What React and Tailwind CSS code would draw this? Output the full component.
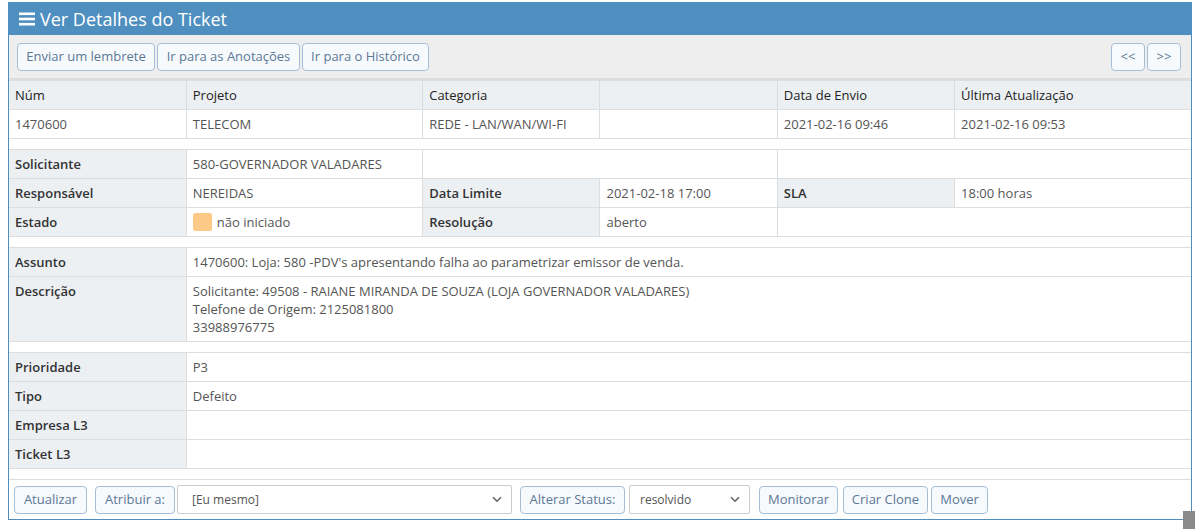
import React from "react";

const btn =
  "h-[28px] px-0 rounded-[4px] border border-[#a6bfd7] bg-[#f7fafd] text-[13px] text-[#5b7896] leading-none whitespace-nowrap";
const lbl = "bg-[#ecf0f3] text-[#333] font-semibold";
const cell =
  "border-t border-b border-l first:border-l-0 border-[#dddddd] px-[6px] py-[5px] leading-[18px] align-top text-[13px]";
const val = "text-[#555]";

function Bars() {
  return (
    <svg width="16" height="14" viewBox="0 0 16 14" className="mr-[5px]">
      <rect x="0" y="0.5" width="16" height="2.6" fill="white" />
      <rect x="0" y="5.7" width="16" height="2.6" fill="white" />
      <rect x="0" y="10.9" width="16" height="2.6" fill="white" />
    </svg>
  );
}

function Chevron() {
  return (
    <svg width="10" height="7" viewBox="0 0 10 7" className="absolute right-[10px] top-[11px] pointer-events-none">
      <path d="M1 1.2 L5 5.2 L9 1.2" stroke="#666" strokeWidth="1.6" fill="none" />
    </svg>
  );
}

function Cols() {
  return (
    <colgroup>
      <col className="w-[15%]" />
      <col className="w-[20%]" />
      <col className="w-[15%]" />
      <col className="w-[15%]" />
      <col className="w-[15%]" />
      <col className="w-[20%]" />
    </colgroup>
  );
}

export default function App() {
  return (
    <div
      className="relative w-[1195px] h-[529px] bg-white pt-[2px] pl-[8px]"
      style={{ fontFamily: '"Open Sans", "Liberation Sans", sans-serif' }}
    >
      <div className="w-[1184px] border border-[#4f8fc0]">
        <div className="h-[32px] bg-[#4f8fc0] flex items-center pl-[10px] text-white text-[18px]">
          <Bars />
          <span>Ver Detalhes do Ticket</span>
        </div>

        <div className="h-[45px] bg-[#eeeeee] border-b-2 border-[#dcdcdc] flex items-center justify-between pl-[8px] pr-[10px]">
          <div className="flex gap-[2px]">
            <button className={btn + " w-[138px]"}>Enviar um lembrete</button>
            <button className={btn + " w-[143px]"}>Ir para as Anotações</button>
            <button className={btn + " w-[127px]"}>Ir para o Histórico</button>
          </div>
          <div className="flex gap-[2px]">
            <button className={btn + " w-[34px] text-[11px]"}>&lt;&lt;</button>
            <button className={btn + " w-[34px] text-[11px]"}>&gt;&gt;</button>
          </div>
        </div>

        <table className="w-full table-fixed border-collapse">
          <Cols />
          <tbody>
            <tr className="bg-[#ecf0f3] text-[#222]">
              <td className={cell}>Núm</td>
              <td className={cell}>Projeto</td>
              <td className={cell}>Categoria</td>
              <td className={cell}></td>
              <td className={cell}>Data de Envio</td>
              <td className={cell}>Última Atualização</td>
            </tr>
            <tr>
              <td className={cell + " " + val}>1470600</td>
              <td className={cell + " " + val}>TELECOM</td>
              <td className={cell + " " + val}>REDE - LAN/WAN/WI-FI</td>
              <td className={cell}></td>
              <td className={cell + " " + val}>2021-02-16 09:46</td>
              <td className={cell + " " + val}>2021-02-16 09:53</td>
            </tr>
          </tbody>
        </table>

        <table className="w-full table-fixed border-collapse mt-[10px]">
          <Cols />
          <tbody>
            <tr>
              <td className={cell + " " + lbl}>Solicitante</td>
              <td className={cell + " " + val}>580-GOVERNADOR VALADARES</td>
              <td className={cell} colSpan={2}></td>
              <td className={cell} colSpan={2}></td>
            </tr>
            <tr>
              <td className={cell + " " + lbl}>Responsável</td>
              <td className={cell + " " + val}>NEREIDAS</td>
              <td className={cell + " " + lbl}>Data Limite</td>
              <td className={cell + " " + val}>2021-02-18 17:00</td>
              <td className={cell + " " + lbl}>SLA</td>
              <td className={cell + " " + val}>18:00 horas</td>
            </tr>
            <tr>
              <td className={cell + " " + lbl}>Estado</td>
              <td className={cell + " " + val}>
                <span className="flex items-center gap-[5px]">
                  <span className="inline-block w-[19px] h-[18px] rounded-[2px] bg-[#fdc987]"></span>
                  não iniciado
                </span>
              </td>
              <td className={cell + " " + lbl}>Resolução</td>
              <td className={cell + " " + val}>aberto</td>
              <td className={cell} colSpan={2}></td>
            </tr>
          </tbody>
        </table>

        <table className="w-full table-fixed border-collapse mt-[10px]">
          <Cols />
          <tbody>
            <tr>
              <td className={cell + " " + lbl}>Assunto</td>
              <td className={cell + " " + val} colSpan={5}>
                1470600: Loja: 580 -PDV's apresentando falha ao parametrizar emissor de venda.
              </td>
            </tr>
            <tr>
              <td className={cell + " " + lbl}>Descrição</td>
              <td className={cell + " " + val} colSpan={5}>
                Solicitante: 49508 - RAIANE MIRANDA DE SOUZA (LOJA GOVERNADOR VALADARES)
                <br />
                Telefone de Origem: 2125081800
                <br />
                33988976775
              </td>
            </tr>
          </tbody>
        </table>

        <table className="w-full table-fixed border-collapse mt-[10px]">
          <Cols />
          <tbody>
            <tr>
              <td className={cell + " " + lbl}>Prioridade</td>
              <td className={cell + " " + val} colSpan={5}>P3</td>
            </tr>
            <tr>
              <td className={cell + " " + lbl}>Tipo</td>
              <td className={cell + " " + val} colSpan={5}>Defeito</td>
            </tr>
            <tr>
              <td className={cell + " " + lbl}>Empresa L3</td>
              <td className={cell} colSpan={5}>&nbsp;</td>
            </tr>
            <tr>
              <td className={cell + " " + lbl}>Ticket L3</td>
              <td className={cell} colSpan={5}>&nbsp;</td>
            </tr>
          </tbody>
        </table>

        <div className="mt-[10px] border-t border-[#dddddd] h-[40px] flex items-center pl-[5px]">
          <button className={btn + " h-[27px] w-[73px]"}>Atualizar</button>
          <button className={btn + " h-[27px] w-[80px] ml-[8px]"}>Atribuir a:</button>
          <div className="relative ml-[2px]">
            <select className="appearance-none w-[335px] h-[29px] border border-[#cccccc] rounded-[2px] bg-white pl-[14px] text-[12px] text-[#555] outline-none">
              <option>[Eu mesmo]</option>
            </select>
            <Chevron />
          </div>
          <button className={btn + " h-[27px] w-[105px] ml-[8px]"}>Alterar Status:</button>
          <div className="relative ml-[4px]">
            <select className="appearance-none w-[121px] h-[29px] border border-[#cccccc] rounded-[2px] bg-white pl-[10px] text-[12px] text-[#555] outline-none">
              <option>resolvido</option>
            </select>
            <Chevron />
          </div>
          <button className={btn + " h-[27px] w-[79px] ml-[9px]"}>Monitorar</button>
          <button className={btn + " h-[27px] w-[85px] ml-[5px]"}>Criar Clone</button>
          <button className={btn + " h-[27px] w-[57px] ml-[3px]"}>Mover</button>
        </div>
      </div>

      <div className="absolute right-0 bottom-0 w-[12px] h-[18px] bg-[#8a8a8a]"></div>
    </div>
  );
}
